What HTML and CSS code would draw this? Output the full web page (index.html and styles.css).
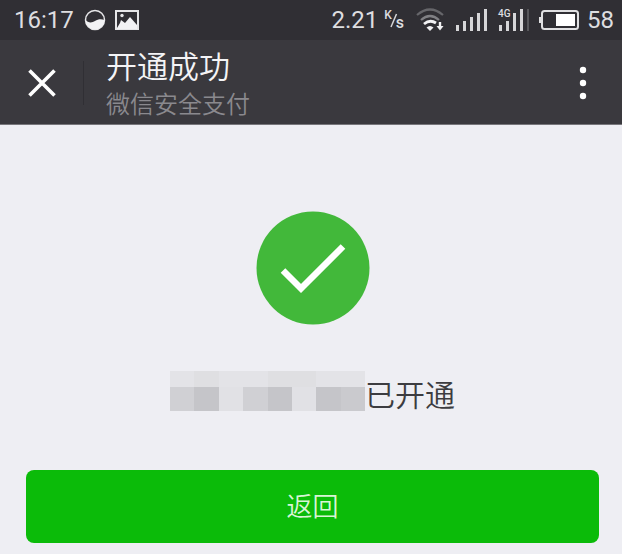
FILE: index.html
```html
<!DOCTYPE html>
<html lang="zh-CN">
<head>
  <meta charset="UTF-8" />
  <meta name="viewport" content="width=device-width, initial-scale=1" />
  <title>开通成功</title>
  <link rel="stylesheet" href="styles.css">
</head>
<body>
  <div class="status-bar">
    <span class="time">16:17</span>
    <svg class="app-icon" width="22" height="22" viewBox="0 0 22 22">
      <circle cx="11" cy="11" r="9.5" fill="none" stroke="#e6e6e8" stroke-width="1.5" />
      <path d="M1.5 11C4 14 8 14 11 12S17 9.500 20.5 11A9.5 9.5 0 0 1 1.5 11Z" fill="#f2f2f4" />
    </svg>
    <svg class="picture-icon" width="24" height="20" viewBox="0 0 24 20">
      <rect x="1" y="1" width="22" height="18" fill="none" stroke="#e6e6e8" stroke-width="2" />
      <circle cx="7" cy="5.5" r="1.7" fill="#e6e6e8" />
      <path d="M2 18L5 13L6 10L10 13L15 7L22 15V19H2Z" fill="#f2f2f4" />
    </svg>

    <span class="speed">2.21</span>
    <span class="unit"><span class="unit-top">K</span><svg width="8" height="16" viewBox="0 0 8 16"><path d="M1 15L6.5 2" stroke="#d6d6d8" stroke-width="1.5" /></svg><span class="unit-bottom">s</span></span>

    <svg class="wifi" width="28" height="24" viewBox="0 0 28 24" fill="none">
      <path d="M1 7Q14 -4 27 7" stroke="#66666a" stroke-width="2.2" />
      <path d="M5 12Q14 4 23 12" stroke="#808084" stroke-width="2.2" />
      <path d="M8 16Q14 11 20 15" stroke="#f2f2f4" stroke-width="2.8" />
      <path d="M10.5 19.5Q14 16.5 17.5 19.5L14 23Z" fill="#f2f2f4" />
      <path d="M24 14V20" stroke="#f2f2f4" stroke-width="2.4" />
      <path d="M20.5 18H27.5L24 22.5Z" fill="#f2f2f4" />
    </svg>
    <svg class="signal" width="32" height="22" viewBox="0 0 32 22" fill="#d6d6d8">
      <path d="M0 16H3V22H0ZM7 12H10V22H7ZM14 8H17V22H14ZM21 4H24V22H21ZM28 0H31V22H28Z" />
    </svg>
    <span class="signal-4g">
      <svg width="32" height="22" viewBox="0 0 32 22" fill="#d6d6d8">
        <path d="M1 16H4V22H1ZM8 12H11V22H8ZM15 4H18V22H15ZM22 0H25V22H22Z" />
        <path d="M29 0H31V22H29Z" fill="#57575b" />
      </svg>
      <span class="network">4G</span>
    </span>
    <svg class="battery" width="40" height="20" viewBox="0 0 40 20">
      <rect x="3" y="1" width="36" height="18" rx="2.5" fill="none" stroke="#e0e0e2" stroke-width="2" />
      <path d="M0 7H3V13H0Z" fill="#e0e0e2" />
      <rect x="17" y="4" width="19" height="12" fill="#fff" />
    </svg>
    <span class="level">58</span>
  </div>

  <header class="nav">
    <button class="icon-btn close" type="button" aria-label="关闭">
      <svg width="28" height="28" viewBox="0 0 28 28">
        <path d="M1.5 1.5L26.5 26.5M26.5 1.5L1.5 26.5" stroke="#fff" stroke-width="3.6" />
      </svg>
    </button>
    <div class="titles">
      <h1>开通成功</h1>
      <p>微信安全支付</p>
    </div>
    <button class="icon-btn more" type="button" aria-label="更多">
      <svg width="8" height="34" viewBox="0 0 8 34" fill="#fff">
        <circle cx="4" cy="4" r="3.2" />
        <circle cx="4" cy="17" r="3.2" />
        <circle cx="4" cy="30" r="3.2" />
      </svg>
    </button>
  </header>

  <main>
    <svg class="success" width="114" height="114" viewBox="0 0 114 114">
      <circle cx="57" cy="57" r="56.5" fill="#42b83a" />
      <path d="M27 59.5L45 77.5L87 35.5" fill="none" stroke="#fff" stroke-width="6.5" />
    </svg>

    <div class="message">
      <!-- masked account name -->
      <div class="mosaic">
        <i class="m1"></i><i class="m2"></i><i class="m1"></i><i class="m1"></i><i class="m2"></i><i class="m2"></i><i class="m1"></i><i class="m1"></i>
        <i class="m4"></i><i class="m6"></i><i class="m3"></i><i class="m4"></i><i class="m6"></i><i class="m3"></i><i class="m6"></i><i class="m5"></i>
      </div>
      <span class="message-text">已开通</span>
    </div>

    <button class="back-btn" type="button">返回</button>
  </main>
</body>
</html>
```

FILE: styles.css
```css
* {
  box-sizing: border-box;
}

body {
  margin: 0;
  background: #eeeef3;
  font-family: Roboto, "Noto Sans CJK SC", sans-serif;
  font-weight: 350;
}

h1,
p {
  margin: 0;
  font-weight: 350;
}

svg {
  display: block;
  flex: none;
}

button {
  border: none;
  padding: 0;
  font-family: inherit;
  cursor: pointer;
}

/* Phone status bar */
.status-bar {
  display: flex;
  align-items: center;
  height: 40px;
  padding: 0 8px 0 14px;
  background: #302f34;
  color: #dedee0;
  font-size: 24px;
  line-height: 40px;
  font-weight: 400;
}

.app-icon {
  margin-left: 10px;
}

.picture-icon {
  margin-left: 9px;
}

.speed {
  margin-left: auto;
}

.unit {
  display: flex;
  align-items: center;
  margin-left: 6px;
  font-size: 12px;
  font-weight: 500;
  line-height: 12px;
}

.unit svg {
  margin: 0 -2px;
}

.unit-top {
  padding-bottom: 10px;
}

.unit-bottom {
  font-size: 16px;
  padding-top: 6px;
}

.wifi {
  margin-left: 12px;
}

.signal {
  margin-left: 12px;
}

.signal-4g {
  position: relative;
  margin-left: 10px;
}

.network {
  position: absolute;
  top: 0;
  left: 0;
  background: #302f34;
  font-size: 10px;
  font-weight: 500;
  line-height: 10px;
}

.battery {
  margin-left: 9px;
}

.level {
  margin-left: 8px;
}

/* Title bar */
.nav {
  display: flex;
  align-items: center;
  height: 85px;
  padding-top: 2px;
  background: #3a393e;
  border-bottom: 1px solid #77767b;
}

.icon-btn {
  display: flex;
  align-items: center;
  justify-content: center;
  background: none;
}

.close {
  width: 84px;
  height: 44px;
  border-right: 1px solid #302f34;
}

.titles {
  flex: 1;
  padding: 4px 0 0 22px;
}

.titles h1 {
  color: #f4f4f6;
  font-size: 31px;
  line-height: 40px;
}

.titles p {
  color: #8a898e;
  font-size: 24px;
  line-height: 34px;
}

.more {
  width: 78px;
  height: 60px;
}

/* Result */
main {
  display: flex;
  flex-direction: column;
  align-items: center;
  padding: 86px 23px 11px 26px;
}

.message {
  display: flex;
  align-items: flex-start;
  margin-top: 46px;
  color: #3c3c40;
  font-size: 30px;
}

.message-text {
  height: 40px;
  line-height: 50px;
}

.mosaic {
  display: grid;
  grid-template-columns: repeat(8, 1fr);
  grid-template-rows: 16px 24px;
  width: 195px;
}

.m1 {
  background: #e3e3e7;
}

.m2 {
  background: #dfdfe2;
}

.m3 {
  background: #e1e1e5;
}

.m4 {
  background: #d0d0d4;
}

.m5 {
  background: #cacace;
}

.m6 {
  background: #c5c5c9;
}

.back-btn {
  width: 100%;
  height: 73px;
  margin-top: 59px;
  padding-bottom: 4px;
  border-radius: 8px;
  background: #0bbb09;
  color: #d8f5d6;
  font-size: 26px;
  font-weight: 350;
}
```
